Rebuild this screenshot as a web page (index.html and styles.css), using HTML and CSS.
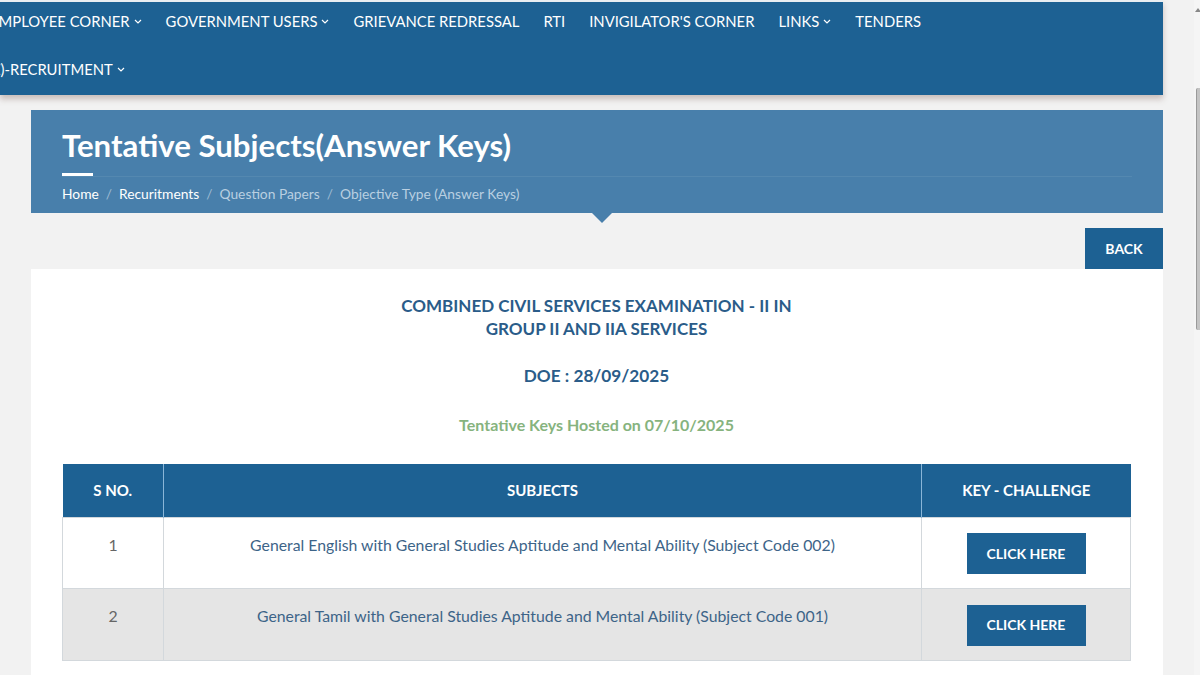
FILE: index.html
```html
<!DOCTYPE html>
<html lang="en">
<head>
<meta charset="utf-8">
<title>Tentative Subjects (Answer Keys)</title>
<link rel="stylesheet" href="styles.css">
</head>
<body>
<div class="page">
  <header class="nav">
    <ul class="nav-row">
      <li>EMPLOYEE CORNER <svg class="chev" viewBox="0 0 8 5"><path d="M1 1l3 3 3-3"/></svg></li>
      <li>GOVERNMENT USERS <svg class="chev" viewBox="0 0 8 5"><path d="M1 1l3 3 3-3"/></svg></li>
      <li>GRIEVANCE REDRESSAL</li>
      <li>RTI</li>
      <li>INVIGILATOR'S CORNER</li>
      <li>LINKS <svg class="chev" viewBox="0 0 8 5"><path d="M1 1l3 3 3-3"/></svg></li>
      <li>TENDERS</li>
    </ul>
    <ul class="nav-row">
      <li>(E)-RECRUITMENT <svg class="chev" viewBox="0 0 8 5"><path d="M1 1l3 3 3-3"/></svg></li>
    </ul>
  </header>

  <main class="container">
    <section class="banner">
      <h1 class="banner-title">Tentative Subjects(Answer Keys)</h1>
      <div class="banner-rule"><span class="rule-bar"></span></div>
      <nav class="crumbs">
        <a class="crumb active">Home</a><span class="sep">/</span>
        <a class="crumb active">Recuritments</a><span class="sep">/</span>
        <a class="crumb">Question Papers</a><span class="sep">/</span>
        <a class="crumb">Objective Type (Answer Keys)</a>
      </nav>
    </section>

    <div class="back-row"><a class="btn back">BACK</a></div>

    <section class="card">
      <h2 class="exam-title">COMBINED CIVIL SERVICES EXAMINATION - II IN<br>GROUP II AND IIA SERVICES</h2>
      <h3 class="doe">DOE : 28/09/2025</h3>
      <p class="hosted">Tentative Keys Hosted on 07/10/2025</p>

      <table class="keys">
        <thead>
          <tr><th class="c-no">S NO.</th><th class="c-sub">SUBJECTS</th><th class="c-key">KEY - CHALLENGE</th></tr>
        </thead>
        <tbody>
          <tr>
            <td class="num">1</td>
            <td class="subject">General English with General Studies Aptitude and Mental Ability (Subject Code 002)</td>
            <td class="action"><a class="btn click">CLICK HERE</a></td>
          </tr>
          <tr class="alt">
            <td class="num">2</td>
            <td class="subject">General Tamil with General Studies Aptitude and Mental Ability (Subject Code 001)</td>
            <td class="action"><a class="btn click">CLICK HERE</a></td>
          </tr>
        </tbody>
      </table>
    </section>
  </main>
</div>
<div class="scrollbar"><span class="sb-arrow"></span><span class="sb-thumb"></span></div>
</body>
</html>
```

FILE: styles.css
```css
* { box-sizing: border-box; }
html, body { margin: 0; padding: 0; }
body {
  background: #f2f2f2;
  font-family: "Lato", "Open Sans", sans-serif;
  color: #333;
  overflow: hidden;
  height: 675px;
}
.page { width: 1163px; }

.nav {
  background: #1d6193;
  height: 95px;
  border-top: 2px solid #e9eef2;
  box-shadow: 0 4px 6px rgba(120, 90, 80, 0.35);
  overflow: hidden;
  position: relative;
  z-index: 2;
}
.nav-row {
  list-style: none;
  margin: 0 0 0 -10px;
  padding: 0;
  display: flex;
  gap: 24px;
  height: 48px;
  align-items: center;
}
.nav-row li {
  color: #fff;
  font-size: 14.8px;
  white-space: nowrap;
  display: flex;
  align-items: center;
  gap: 4px;
}
.nav-row:first-child { height: 38px; }
.nav-row:last-child { margin-left: -12px; height: 58px; }
.chev { width: 8px; height: 5px; fill: none; stroke: #fff; stroke-width: 1.2; }

.container { margin-left: 31px; padding-top: 15px; }

.banner {
  background: #487fab;
  height: 103px;
  padding: 15px 31px 0;
  position: relative;
}
.banner::after {
  content: "";
  position: absolute;
  left: 561px;
  bottom: -10px;
  border-left: 10px solid transparent;
  border-right: 10px solid transparent;
  border-top: 10px solid #487fab;
}
.banner-title {
  margin: 0;
  color: #fff;
  font-size: 31.2px;
  line-height: 40px;
  font-weight: 700;
}
.banner-rule {
  margin-top: 8px;
  height: 4px;
  border-bottom: 1px solid rgba(255, 255, 255, 0.07);
}
.rule-bar { display: block; width: 31px; height: 3px; background: #fff; }
.crumbs {
  margin-top: 7px;
  font-size: 13.8px;
  line-height: 20px;
  display: flex;
  gap: 7px;
}
.crumb { color: #b9cfe1; }
.crumb.active { color: #fff; }
.sep { color: #9dbad2; }

.back-row { display: flex; justify-content: flex-end; margin-top: 15px; }
.btn {
  display: inline-flex;
  align-items: center;
  justify-content: center;
  background: #1d6193;
  color: #fff;
  font-weight: 700;
  font-size: 14px;
}
.back { width: 78px; height: 41px; }

.card {
  background: #fff;
  padding: 25px 32px 40px 31px;
  height: 420px;
  text-align: center;
}
.exam-title {
  margin: 0;
  color: #2a5c89;
  font-size: 17px;
  line-height: 23px;
  font-weight: 700;
}
.doe {
  margin: 24px 0 0;
  color: #2a5c89;
  font-size: 17.2px;
  line-height: 24px;
  font-weight: 700;
}
.hosted {
  margin: 26px 0 0;
  color: #86b37e;
  font-size: 16px;
  line-height: 22px;
  font-weight: 700;
}

.keys {
  margin-top: 28px;
  width: 100%;
  border-collapse: collapse;
}
.keys th {
  background: #1d6193;
  color: #fff;
  font-size: 15px;
  font-weight: 700;
  height: 53px;
  padding: 0;
  border-left: 1px solid #8ab6d8;
}
.keys th:first-child { border-left: none; }
.c-no { width: 101px; }
.c-key { width: 209px; }
.keys td {
  border: 1px solid #d3d8dc;
  padding: 16px 8px 0;
  vertical-align: top;
  font-size: 15.8px;
  line-height: 22px;
}
.keys tbody tr { height: 71px; }
.keys tbody tr.alt { height: 72px; background: #e5e5e5; }
.num { color: #666; }
.subject { color: #3d6488; }
.keys td.action { padding: 0; vertical-align: middle; }
.click { width: 119px; height: 41px; margin-top: 2px; }

.scrollbar {
  position: fixed;
  top: 0;
  right: 0;
  width: 6px;
  height: 675px;
  background: #f5f5f5;
}
.sb-arrow {
  position: absolute;
  top: 8px;
  left: 1px;
  border-left: 3px solid transparent;
  border-right: 3px solid transparent;
  border-bottom: 4px solid #888;
}
.sb-thumb {
  position: absolute;
  top: 88px;
  left: 2px;
  width: 4px;
  height: 242px;
  background: #c4c4c4;
  border-left: 1px solid #9a9a9a;
  border-radius: 2px 0 0 2px;
}
```
